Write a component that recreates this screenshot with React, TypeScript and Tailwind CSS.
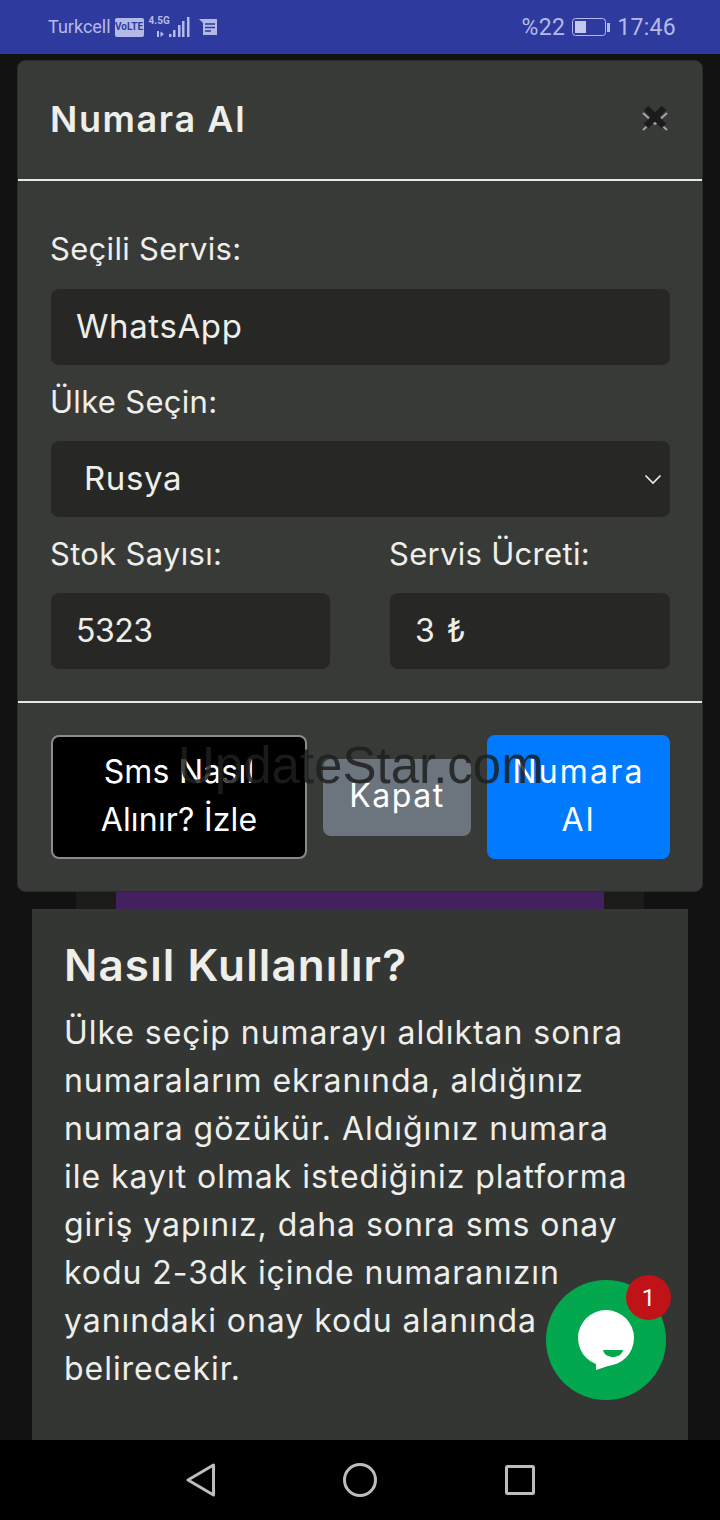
export default function App() {
  return (
    <div className="relative flex h-[1520px] w-[720px] flex-col overflow-hidden bg-[#111211] font-['Inter','Liberation_Sans',sans-serif] text-[#eeeeea]">
      <StatusBar />

      <main className="flex min-h-0 flex-1 flex-col">
        <div className="px-[17px] pt-[6px]">
          <Modal />
        </div>
        <div className="mx-[76px] flex h-[17px] justify-center bg-[#1b1b1a]">
          <div className="h-full w-[488px] bg-[#45205e]" />
        </div>
        <section className="mx-[32px] flex-1 bg-[#343634] pt-[27px] pr-[33px] pl-[32px]">
          <h2 className="text-[44px] leading-[58px] font-semibold tracking-[1.1px]">Nasıl Kullanılır?</h2>
          <p className="mt-[15px] text-[32px] leading-[48px] tracking-[0.96px]">
            Ülke seçip numarayı aldıktan sonra
            <br />
            numaralarım ekranında, aldığınız
            <br />
            numara gözükür. Aldığınız numara
            <br />
            ile kayıt olmak istediğiniz platforma
            <br />
            giriş yapınız, daha sonra sms onay
            <br />
            kodu 2-3dk içinde numaranızın
            <br />
            yanındaki onay kodu alanında
            <br />
            belirecekir.
          </p>
        </section>
      </main>

      <nav className="flex h-[80px] shrink-0 items-center justify-center gap-[128px] bg-black">
        <svg width="29" height="34" viewBox="0 0 29 34" fill="none" stroke="#bdbdbd" strokeWidth="3" strokeLinejoin="round">
          <path d="M2 17 L27.5 2 V32 Z" />
        </svg>
        <svg width="34" height="34" viewBox="0 0 34 34" fill="none" stroke="#bdbdbd" strokeWidth="3">
          <circle cx="17" cy="17" r="15.5" />
        </svg>
        <svg width="30" height="30" viewBox="0 0 30 30" fill="none" stroke="#bdbdbd" strokeWidth="3" strokeLinejoin="round">
          <rect x="1.5" y="1.5" width="27" height="27" rx="1" />
        </svg>
      </nav>

      <ChatButton />

      {/* watermark sits over the modal footer */}
      <div className="pointer-events-none absolute top-[735px] left-[178px] font-['Liberation_Sans',sans-serif] text-[51px] leading-[62px] whitespace-nowrap text-[#1d1f1e]/85">
        UpdateStar.com
      </div>
    </div>
  );
}

function StatusBar() {
  return (
    <header className="flex h-[54px] shrink-0 items-center justify-between bg-[#2f3a9e] pr-[44px] pl-[48px] font-['Roboto',sans-serif] text-[#b4bae8]">
      <div className="flex items-center">
        <span className="text-[18px] leading-none">Turkcell</span>
        <span className="ml-[4px] flex h-[19px] w-[29px] items-center justify-center rounded-[2px] bg-[#b4bae8] text-[10px] leading-none font-bold text-[#2f3a9e]">
          VoLTE
        </span>
        <div className="relative ml-[5px] h-[24px] w-[41px]">
          <span className="absolute top-[-1px] left-0 text-[10px] leading-[14px] font-bold">4.5G</span>
          <svg className="absolute top-0 left-0" width="41" height="24" viewBox="0 0 41 24" fill="#b4bae8">
            <rect x="20" y="19" width="2.5" height="3" />
            <rect x="24" y="15" width="2.5" height="7" />
            <rect x="29" y="10" width="2.5" height="12" />
            <rect x="33" y="6" width="2.5" height="16" />
            <rect x="38" y="2" width="2.5" height="20" />
            <path d="M8 16h2v6H8z M11.5 16.5l3.5 2.5-3.5 3z" />
          </svg>
        </div>
        <svg className="ml-[9px]" width="19" height="16" viewBox="0 0 19 16" fill="none">
          <path d="M0 0 H18 V16 H4 V4 Z" fill="#b4bae8" />
          <path d="M6 5h10 M6 8.5h10 M6 12h6" stroke="#2f3a9e" strokeWidth="1.6" />
        </svg>
      </div>
      <div className="flex items-center">
        <span className="text-[23px] leading-none tracking-[0.3px]">%22</span>
        <svg className="mx-[7px]" width="38" height="20" viewBox="0 0 38 20" fill="none">
          <rect x="0.5" y="1.5" width="33" height="17" rx="3" stroke="#b4bae8" />
          <rect x="3" y="4" width="11" height="12" fill="#c3c8ee" />
          <rect x="35" y="6" width="3" height="9" fill="#b4bae8" />
        </svg>
        <span className="text-[23px] leading-none tracking-[0.3px]">17:46</span>
      </div>
    </header>
  );
}

function Modal() {
  return (
    <div className="h-[832px] rounded-[8px] border border-[#2a2b2a] bg-[#383a38]">
      <div className="flex h-[120px] items-center justify-between border-b-2 border-[#e8e8e4] pr-[34px] pb-[2px] pl-[32px]">
        <h1 className="text-[36px] leading-none font-semibold tracking-[1.6px]">Numara Al</h1>
        <svg className="-mt-[2px]" width="26" height="27" viewBox="0 0 26 27" fill="none">
          <path d="M1 8 L13 19 L25 8 M1 25 L13 14 L25 25" stroke="#a3a5a0" strokeWidth="2" />
          <path d="M4 3 L22 21 M22 3 L4 21" stroke="#1b1c1b" strokeWidth="6.5" />
        </svg>
      </div>

      <div className="h-[522px] border-b-2 border-[#e8e8e4] pt-[46px] pr-[32px] pl-[33px]">
        <Label>Seçili Servis:</Label>
        <Field className="mt-[18px] text-[33px] tracking-[0.6px]">WhatsApp</Field>
        <Label className="mt-[15px]">Ülke Seçin:</Label>
        <div className="mt-[17px] flex h-[76px] items-center justify-between rounded-[8px] bg-[#272826] pr-[8px] pl-[33px] text-[33px] tracking-[0.6px]">
          <span>Rusya</span>
          <svg width="18" height="12" viewBox="0 0 18 12" fill="none" stroke="#eeeeea" strokeWidth="1.6">
            <path d="M1.5 2.5 L9 10 L16.5 2.5" />
          </svg>
        </div>
        <div className="mt-[15px] grid grid-cols-[279px_280px] gap-x-[60px]">
          <div>
            <Label>Stok Sayısı:</Label>
            <Field className="mt-[17px] text-[32px] tracking-[-0.5px]">5323</Field>
          </div>
          <div>
            <Label>Servis Ücreti:</Label>
            <Field className="mt-[17px] text-[32px] tracking-[1.5px]">3 ₺</Field>
          </div>
        </div>
      </div>

      <div className="flex items-center gap-[16px] pt-[32px] pr-[32px] pl-[33px] text-center text-[32px] leading-[48px] text-white">
        <button className="h-[124px] w-[256px] rounded-[8px] border-2 border-[#8a8c8a] bg-black px-[40px] pb-[2px] tracking-[0.2px]">Sms Nasıl Alınır? İzle</button>
        <button className="h-[77px] w-[148px] rounded-[8px] bg-[#6c757d] pb-[2px] tracking-[1.5px]">Kapat</button>
        <button className="h-[124px] w-[183px] rounded-[8px] bg-[#007bff] px-[20px] pb-[2px] tracking-[2.2px]">Numara Al</button>
      </div>
    </div>
  );
}

function Label({ children, className = '' }: { children: React.ReactNode; className?: string }) {
  return <div className={`-ml-[1px] text-[31px] leading-[44px] tracking-[0.3px] ${className}`}>{children}</div>;
}

function Field({ children, className = '' }: { children: React.ReactNode; className?: string }) {
  return <div className={`flex h-[76px] items-center rounded-[8px] bg-[#272826] pl-[25px] ${className}`}>{children}</div>;
}

function ChatButton() {
  return (
    <div className="absolute top-[1280px] left-[546px] flex size-[120px] items-center justify-center rounded-full bg-[#03a84e]">
      <svg width="56" height="60" viewBox="0 0 56 60">
        <circle cx="28" cy="28" r="28" fill="#fff" />
        <path d="M18 50 L18 60 L42 52 Z" fill="#fff" />
        <path d="M25 40 H45 C44 45 39 47 35 47 C31 47 26 45 25 40 Z" fill="#03a84e" />
      </svg>
      <span className="absolute top-[-5px] right-[-5px] flex size-[45px] items-center justify-center rounded-full bg-[#c01317] font-['Roboto',sans-serif] text-[24px] leading-none text-white">
        1
      </span>
    </div>
  );
}
